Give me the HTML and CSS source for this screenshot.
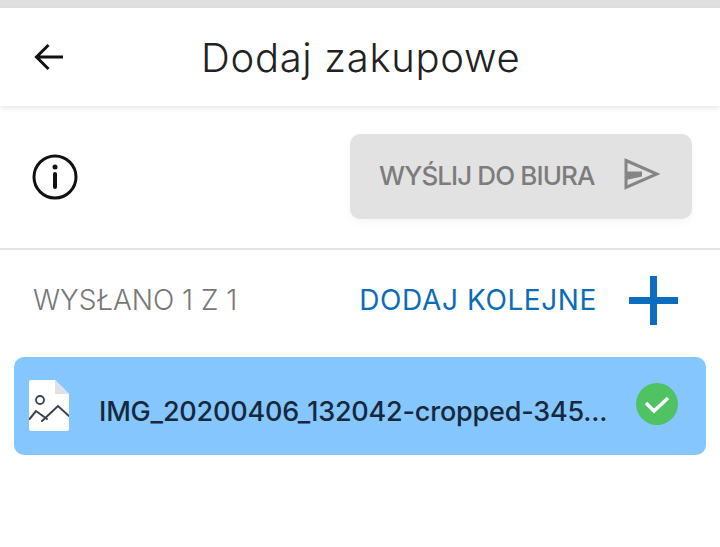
FILE: index.html
```html
<!DOCTYPE html>
<html lang="pl">
<head>
  <meta charset="UTF-8" />
  <title>Dodaj zakupowe</title>
  <link rel="stylesheet" href="styles.css">
</head>
<body>
  <div class="status-bar"></div>
  <header class="main-header">
    <svg class="back-icon" width="30" height="28" viewBox="0 0 30 28">
      <path d="M29 14H3M14.500 2L2.500 14L14.500 26" fill="none" stroke="#111" stroke-width="3"/>
    </svg>
    <h1>Dodaj zakupowe</h1>
  </header>

  <section class="action-row">
    <svg class="info-icon" width="46" height="46" viewBox="0 0 46 46">
      <circle cx="23" cy="23" r="21" fill="none" stroke="#111" stroke-width="3"/>
      <circle cx="23" cy="13" r="2.500" fill="#111"/>
      <path d="M23 20V33" stroke="#111" stroke-width="4" stroke-linecap="round"/>
    </svg>
    <button class="send-btn" type="button">
      <span>WYŚLIJ DO BIURA</span>
      <svg class="send-icon" width="36" height="32" viewBox="0 0 36 32">
        <path d="M2 2.500L33 16L2 29.500Z" fill="none" stroke="#858585" stroke-width="3"/>
        <path d="M2 13.500H18V18.500L2 22Z" fill="#858585"/>
      </svg>
    </button>
  </section>

  <section class="count-row">
    <span class="count">WYSŁANO 1 Z 1</span>
    <span class="add-more">DODAJ KOLEJNE</span>
    <svg class="plus-icon" width="49" height="49" viewBox="0 0 49 49">
      <path d="M0 24.500H49M24.500 0V49" stroke="#0b6cc0" stroke-width="7"/>
    </svg>
  </section>

  <div class="file-card">
    <svg class="file-icon" width="40" height="51" viewBox="0 0 40 51">
      <path d="M2 0H26L40 14V49a2 2 0 0 1-2 2H2a2 2 0 0 1-2-2V2a2 2 0 0 1 2-2Z" fill="#fff"/>
      <path d="M26 0L40 14H26Z" fill="#dfe1e8"/>
      <circle cx="11" cy="20" r="4" fill="none" stroke="#38424d" stroke-width="1.800"/>
      <path d="M0.500 39L7 31L18 39M13 41L29 26L40 36" fill="none" stroke="#38424d" stroke-width="2" stroke-linecap="round"/>
    </svg>
    <span class="file-name">IMG_20200406_132042-cropped-345...</span>
    <svg class="ok-icon" width="42" height="42" viewBox="0 0 42 42">
      <circle cx="21" cy="21" r="21" fill="#4fc264"/>
      <path d="M10 20L18 28L32 15" fill="none" stroke="#fff" stroke-width="3.500"/>
    </svg>
  </div>
</body>
</html>
```

FILE: styles.css
```css
body {
  font-family: "Inter", "Liberation Sans", sans-serif;
  background-color: #ffffff;
  margin: 0;
  padding: 0;
  color: #222222;
}

.status-bar {
  height: 8px;
  background-color: #e0e0e0;
}

.main-header {
  height: 98px;
  display: flex;
  align-items: center;
  box-shadow: 0 2px 5px rgba(0, 0, 0, 0.1);
  padding-left: 34px;
}

.main-header h1 {
  margin: 0 0 0 137px;
  font-size: 40px;
  font-weight: 350;
  letter-spacing: 0.7px;
  color: #222222;
}

.action-row {
  height: 142px;
  display: flex;
  align-items: center;
  justify-content: space-between;
  padding: 0 28px 0 32px;
  border-bottom: 2px solid #e4e4e4;
  box-sizing: content-box;
}

.send-btn {
  width: 342px;
  height: 85px;
  margin-top: -1px;
  display: flex;
  align-items: center;
  justify-content: space-between;
  padding: 0 32px 0 29px;
  background-color: #e2e2e2;
  border: none;
  border-radius: 10px;
  box-shadow: 0 3px 8px rgba(0, 0, 0, 0.04);
  font-family: inherit;
  font-size: 26px;
  font-weight: 500;
  letter-spacing: -0.9px;
  color: #7c7c7c;
}

.send-btn span {
  margin-top: -2px;
}

.send-icon {
  margin-top: -5px;
}

.count-row {
  height: 106px;
  margin-top: -3px;
  display: flex;
  align-items: center;
  padding: 0 42px 0 33px;
  font-size: 28px;
}

.count {
  color: #777777;
  font-weight: 350;
  letter-spacing: 0;
}

.add-more {
  margin-left: auto;
  margin-right: 32px;
  color: #0b6cb8;
  font-weight: 400;
  letter-spacing: 0.6px;
}

.file-card {
  margin: 4px 14px 0;
  height: 98px;
  display: flex;
  align-items: center;
  padding: 0 28px 0 15px;
  background-color: #85c6ff;
  border-radius: 10px;
}

.file-icon {
  margin-top: -1px;
}

.file-name {
  margin-left: 30px;
  margin-top: 10px;
  font-size: 27px;
  font-weight: 500;
  letter-spacing: -0.2px;
  color: #16293c;
  white-space: nowrap;
}

.ok-icon {
  margin-left: auto;
  margin-top: -5px;
}
```
